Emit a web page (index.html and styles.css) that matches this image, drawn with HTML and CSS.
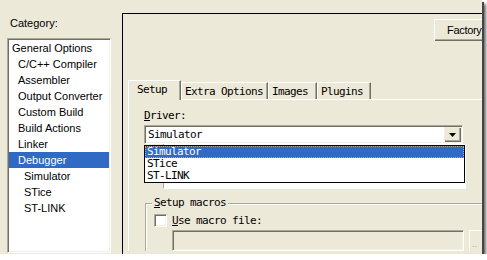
FILE: index.html
```html
<!DOCTYPE html>
<html lang="en">
<head>
    <meta charset="UTF-8">
    <title>Options for node</title>
    <link rel="stylesheet" href="styles.css">
</head>
<body>
    <div class="window">
        <!-- Category tree -->
        <aside class="sidebar">
            <div class="caption">Category:</div>
            <ul class="listbox">
                <li>General Options</li>
                <li class="l1">C/C++ Compiler</li>
                <li class="l1">Assembler</li>
                <li class="l1">Output Converter</li>
                <li class="l1">Custom Build</li>
                <li class="l1">Build Actions</li>
                <li class="l1">Linker</li>
                <li class="l1 selected">Debugger</li>
                <li class="l2">Simulator</li>
                <li class="l2">STice</li>
                <li class="l2">ST-LINK</li>
            </ul>
        </aside>

        <!-- Settings page -->
        <section class="main">
            <div class="toolbar">
                <button class="btn factory">Factory</button>
            </div>

            <div class="tabstrip">
                <div class="tab active">Setup</div>
                <div class="tab">Extra Options</div>
                <div class="tab">Images</div>
                <div class="tab">Plugins</div>
            </div>

            <div class="tabpanel">
                <div class="field">
                    <div class="label"><u>D</u>river:</div>
                    <div class="combo">
                        <span class="value">Simulator</span>
                        <span class="drop-btn">
                            <svg width="7" height="4" viewBox="0 0 7 4"><path d="M0 0h7L3.5 4z" fill="#000"/></svg>
                        </span>
                    </div>
                    <div class="under-box"></div>
                    <ul class="combo-list">
                        <li class="selected">Simulator</li>
                        <li>STice</li>
                        <li>ST-LINK</li>
                    </ul>
                </div>

                <div class="group">
                    <div class="legend"><u>S</u>etup macros</div>
                    <div class="check-row">
                        <span class="checkbox"></span>
                        <span><u>U</u>se macro file:</span>
                    </div>
                    <div class="file-row">
                        <div class="textbox"></div>
                        <button class="btn browse">..</button>
                    </div>
                </div>
            </div>
        </section>
    </div>
</body>
</html>
```

FILE: styles.css
```css
body {
    margin: 0;
    background: #fff;
    font-family: "Liberation Sans", Arial, sans-serif;
    font-size: 11px;
    color: #000;
}

.window {
    width: 482px;
    height: 254px;
    background: #ece9d8;
    display: flex;
    overflow: hidden;
    box-shadow: 2px 2px 0 #444, 4px 4px 3px rgba(0, 0, 0, 0.6);
}

/* left column */
.sidebar {
    width: 122px;
    flex-shrink: 0;
    padding-top: 17px;
    box-sizing: border-box;
}

.caption {
    padding-left: 10px;
    line-height: 13px;
    height: 21px;
}

.listbox {
    list-style: none;
    margin: 0 0 0 7px;
    padding: 1px 0 0;
    width: 104px;
    height: 215px;
    box-sizing: border-box;
    background: #fff;
    border-top: 1px solid #aca899;
    border-left: 1px solid #aca899;
    border-right: 1px solid #fff;
    border-bottom: 1px solid #fff;
    box-shadow: inset 1px 1px #716f64, inset -1px -1px #f1efe2;
}

.listbox li {
    height: 16px;
    line-height: 16px;
    padding-left: 3px;
    margin-left: 1px;
    margin-right: 1px;
    white-space: nowrap;
}

.listbox li.l1 {
    padding-left: 9px;
}

.listbox li.l2 {
    padding-left: 15px;
}

.listbox li.selected {
    background: #316ac5;
    color: #fff;
}

/* right column */
.main {
    flex: 1;
    margin-top: 13px;
    border-top: 1px solid #000;
    border-left: 1px solid #000;
    font-family: "DejaVu Sans Mono", "Liberation Mono", monospace;
    font-size: 11px;
    letter-spacing: -0.62px;
}

.toolbar {
    height: 66px;
    padding: 5px 0 0 311px;
    box-sizing: border-box;
    white-space: nowrap;
}

.btn {
    background: #ece9d8;
    border: none;
    padding: 0;
    margin: 0;
    font: 11px "Liberation Sans", Arial, sans-serif;
    letter-spacing: 0;
    color: #000;
    box-shadow: inset 1px 1px #fff, inset -1px -1px #716f64, inset -2px -2px #aca899;
}

.factory {
    width: 80px;
    height: 22px;
    text-align: left;
    padding-left: 13px;
    letter-spacing: -0.3px;
}

.tabstrip {
    display: flex;
    align-items: flex-end;
    height: 19px;
    padding-left: 5px;
}

.tab {
    height: 17px;
    line-height: 17px;
    padding-left: 3px;
    box-sizing: border-box;
    border-top: 1px solid #fff;
    border-left: 1px solid #fff;
    border-right: 1px solid #716f64;
    box-shadow: inset -1px 0 #aca899;
    white-space: nowrap;
}

.tab:nth-child(2) { width: 87px; }
.tab:nth-child(3) { width: 49px; }
.tab:nth-child(4) { width: 54px; }

.tab.active {
    width: 53px;
    height: 20px;
    line-height: 18px;
    padding-left: 8px;
    margin-bottom: -1px;
    background: #ece9d8;
    position: relative;
    z-index: 1;
}

.tabpanel {
    margin-left: 5px;
    border-top: 1px solid #fff;
    border-left: 1px solid #fff;
}

.field {
    position: relative;
    padding: 10px 0 0 15px;
}

.label {
    line-height: 12px;
    height: 12px;
}

.combo {
    margin-top: 3px;
    width: 319px;
    height: 19px;
    box-sizing: border-box;
    background: #fff;
    border-top: 1px solid #aca899;
    border-left: 1px solid #aca899;
    border-right: 1px solid #fff;
    border-bottom: 1px solid #fff;
    box-shadow: inset 1px 1px #716f64, inset -1px -1px #f1efe2;
    display: flex;
    align-items: center;
    justify-content: space-between;
    padding: 1px 1px 1px 3px;
}

.drop-btn {
    width: 17px;
    height: 15px;
    background: #ece9d8;
    box-shadow: inset 1px 1px #f1efe2, inset -1px -1px #716f64, inset -2px -2px #aca899;
    display: flex;
    align-items: center;
    justify-content: center;
}

.under-box {
    margin-left: 19px;
    width: 303px;
    height: 45px;
    box-sizing: border-box;
    background: #fff;
    border-left: 1px solid #aca899;
    border-right: 1px solid #fff;
    border-bottom: 1px solid #fff;
}

.combo-list {
    position: absolute;
    left: 15px;
    top: 45px;
    width: 321px;
    height: 38px;
    margin: 0;
    padding: 0;
    list-style: none;
    box-sizing: border-box;
    background: #fff;
    border: 1px solid #000;
}

.combo-list li {
    height: 12px;
    line-height: 12px;
    padding-left: 2px;
}

.combo-list li.selected {
    background: #316ac5;
    color: #fff;
    outline: 1px dotted #e0a050;
    outline-offset: -1px;
}

.group {
    margin: 14px 0 0 16px;
    border-top: 1px solid #aca899;
    border-left: 1px solid #aca899;
    box-shadow: inset 1px 1px #fff;
    padding-left: 8px;
}

.legend {
    width: fit-content;
    margin: -7px 0 0 -2px;
    padding: 0 2px;
    height: 12px;
    line-height: 12px;
    background: #ece9d8;
}

.check-row {
    display: flex;
    align-items: center;
    gap: 5px;
    margin-top: 5px;
    height: 13px;
    line-height: 13px;
}

.checkbox {
    width: 13px;
    height: 13px;
    box-sizing: border-box;
    background: #fff;
    border-top: 1px solid #aca899;
    border-left: 1px solid #aca899;
    border-right: 1px solid #fff;
    border-bottom: 1px solid #fff;
    box-shadow: inset 1px 1px #716f64, inset -1px -1px #f1efe2;
}

.file-row {
    display: flex;
    gap: 5px;
    margin: 3px 0 0 18px;
}

.textbox {
    width: 292px;
    height: 21px;
    flex-shrink: 0;
    box-sizing: border-box;
    border-top: 1px solid #aca899;
    border-left: 1px solid #aca899;
    border-right: 1px solid #fff;
    border-bottom: 1px solid #fff;
    box-shadow: inset 1px 1px #716f64, inset -1px -1px #f1efe2;
}

.browse {
    width: 13px;
    height: 21px;
    flex-shrink: 0;
    color: #aca899;
    text-align: left;
    padding: 6px 0 0 3px;
    font-size: 9px;
    box-shadow: inset 1px 1px #fff;
}
```
